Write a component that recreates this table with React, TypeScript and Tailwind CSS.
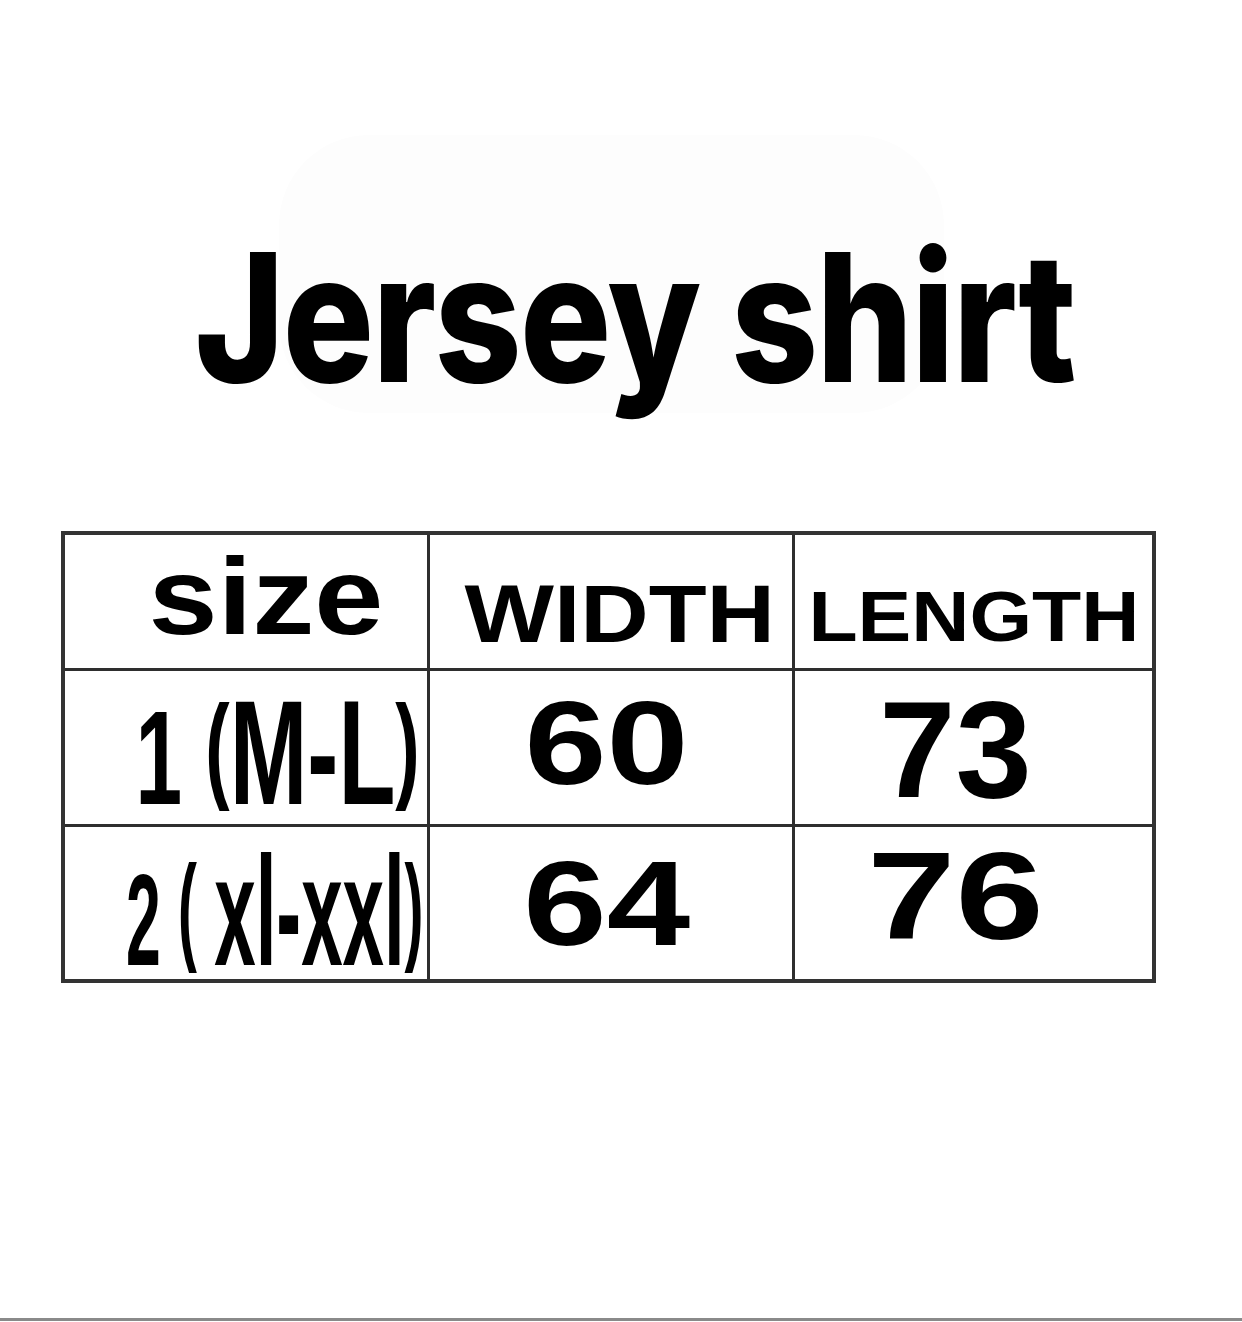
import React from 'react';

const font = "font-['Liberation_Sans',Arial,sans-serif]";

function Cell({ className = '', children }: { className?: string; children: React.ReactNode }) {
  return <div className={`flex items-center justify-center overflow-visible border-[#2e2e2e] ${className}`}>{children}</div>;
}

export default function App() {
  return (
    <div className={`flex h-[1322px] w-[1242px] flex-col bg-white text-black ${font}`}>
      <div className="relative mt-[228px] flex h-[182px] justify-center pl-[28px]">
        <div className="absolute left-[279px] top-[-93px] h-[278px] w-[665px] rounded-[90px] bg-[#fdfdfd]" />
        <h1 className="relative inline-block scale-x-[0.85] whitespace-nowrap font-['Inter',sans-serif] text-[179px] font-extrabold leading-none tracking-[-2px]">
          Jersey shirt
        </h1>
      </div>

      <div className="ml-[61px] mt-[121px] grid w-fit grid-cols-[365px_365px_357px] grid-rows-[136px_156px_152px] border-4 border-[#333]">
        <Cell className="border-r-[3px] border-b-[3px] pl-[40px] pb-[10px]">
          <span className="inline-block scale-x-[1.14] whitespace-nowrap text-[109px] font-bold leading-none">size</span>
        </Cell>
        <Cell className="border-r-[3px] border-b-[3px] pl-[17px] pt-[25px]">
          <span className="inline-block scale-x-[1.17] whitespace-nowrap text-[81px] font-bold leading-none">WIDTH</span>
        </Cell>
        <Cell className="border-b-[3px] pt-[31px]">
          <span className="inline-block scale-x-[1.15] whitespace-nowrap text-[70px] font-bold leading-none">LENGTH</span>
        </Cell>

        <Cell className="border-r-[3px] border-b-[3px] pl-[64px] pt-[11px]">
          <span className="inline-block scale-x-[0.63] whitespace-nowrap text-[133px] font-bold leading-none">
            1 <span className="align-[17px] text-[116px]">(</span>
            <span className="text-[148px]">M-L</span>
            <span className="align-[17px] text-[116px]">)</span>
          </span>
        </Cell>
        <Cell className="border-r-[3px] border-b-[3px] pr-[9px] pb-[10px]">
          <span className="inline-block scale-x-[1.25] whitespace-nowrap text-[118px] font-bold leading-none">60</span>
        </Cell>
        <Cell className="border-b-[3px] pr-[36px] pt-[4px]">
          <span className="inline-block whitespace-nowrap text-[137px] font-bold leading-none">73</span>
        </Cell>

        <Cell className="border-r-[3px] pl-[58px] pt-[17px]">
          <span className="inline-block scale-x-[0.48] whitespace-nowrap text-[130px] font-bold leading-none">
            2 <span className="align-[17px] text-[118px]">(</span> <span className="text-[155px]">xl-xxl</span>
            <span className="align-[17px] text-[118px]">)</span>
          </span>
        </Cell>
        <Cell className="border-r-[3px] pr-[8px]">
          <span className="inline-block scale-x-[1.25] whitespace-nowrap text-[120px] font-bold leading-none">64</span>
        </Cell>
        <Cell className="pr-[36px] pb-[15px]">
          <span className="inline-block scale-x-[1.27] whitespace-nowrap text-[125px] font-bold leading-none">76</span>
        </Cell>
      </div>

      <div className="mt-auto mb-[1px] h-[3px] w-full bg-[#8a8a8a]" />
    </div>
  );
}
